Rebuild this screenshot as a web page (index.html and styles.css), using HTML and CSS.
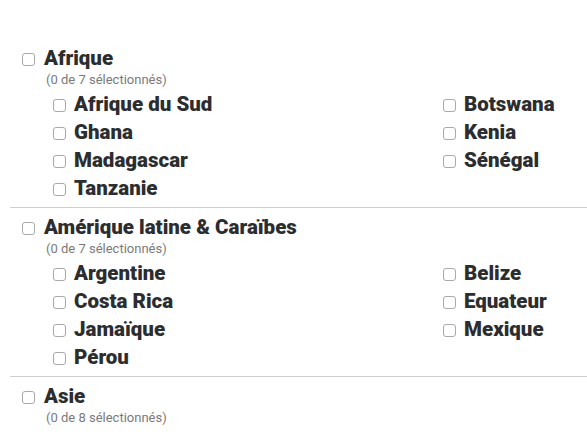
FILE: index.html
```html
<!DOCTYPE html>
<html lang="fr">
<head>
<meta charset="utf-8">
<link rel="stylesheet" href="styles.css">
</head>
<body>
<div class="regions">
  <section class="region">
    <label class="region-head"><input type="checkbox" class="cb"><span>Afrique</span></label>
    <div class="count">(0 de 7 sélectionnés)</div>
    <div class="countries">
      <label class="country"><input type="checkbox" class="cb"><span>Afrique du Sud</span></label>
      <label class="country"><input type="checkbox" class="cb"><span>Botswana</span></label>
      <label class="country"><input type="checkbox" class="cb"><span>Ghana</span></label>
      <label class="country"><input type="checkbox" class="cb"><span>Kenia</span></label>
      <label class="country"><input type="checkbox" class="cb"><span>Madagascar</span></label>
      <label class="country"><input type="checkbox" class="cb"><span>Sénégal</span></label>
      <label class="country"><input type="checkbox" class="cb"><span>Tanzanie</span></label>
    </div>
  </section>
  <section class="region">
    <label class="region-head"><input type="checkbox" class="cb"><span>Amérique latine &amp; Caraïbes</span></label>
    <div class="count">(0 de 7 sélectionnés)</div>
    <div class="countries">
      <label class="country"><input type="checkbox" class="cb"><span>Argentine</span></label>
      <label class="country"><input type="checkbox" class="cb"><span>Belize</span></label>
      <label class="country"><input type="checkbox" class="cb"><span>Costa Rica</span></label>
      <label class="country"><input type="checkbox" class="cb"><span>Equateur</span></label>
      <label class="country"><input type="checkbox" class="cb"><span>Jamaïque</span></label>
      <label class="country"><input type="checkbox" class="cb"><span>Mexique</span></label>
      <label class="country"><input type="checkbox" class="cb"><span>Pérou</span></label>
    </div>
  </section>
  <section class="region">
    <label class="region-head"><input type="checkbox" class="cb"><span>Asie</span></label>
    <div class="count">(0 de 8 sélectionnés)</div>
  </section>
</div>
</body>
</html>
```
FILE: styles.css
```css
html, body {
  margin: 0;
  padding: 0;
  overflow: hidden;
  background: #fff;
}
body {
  font-family: "Roboto", "Liberation Sans", sans-serif;
  color: #2b2d2f;
}
.regions {
  padding: 39px 0 0 10px;
}
.region {
  padding: 7px 0 5px;
  border-bottom: 1px solid #cfcfcf;
}
.region:last-child {
  border-bottom: none;
}
.cb {
  appearance: none;
  -webkit-appearance: none;
  margin: 0;
  width: 13px;
  height: 13px;
  flex: 0 0 13px;
  border: 1px solid #a9a9a9;
  border-radius: 3px;
  background: #fff;
  position: relative;
  top: 1px;
}
.region-head {
  display: flex;
  align-items: center;
  gap: 9px;
  height: 24px;
  padding-left: 12px;
  font-size: 20.5px;
  font-weight: 900;
  white-space: nowrap;
}
.count {
  padding-left: 36px;
  height: 20px;
  line-height: 20px;
  font-size: 13px;
  color: #7a7a7a;
}
.countries {
  display: grid;
  grid-template-columns: 390px minmax(0, 1fr);
  padding-left: 43px;
}
.country {
  display: flex;
  align-items: center;
  gap: 8px;
  height: 28px;
  font-size: 20.5px;
  font-weight: 900;
  white-space: nowrap;
}
```
